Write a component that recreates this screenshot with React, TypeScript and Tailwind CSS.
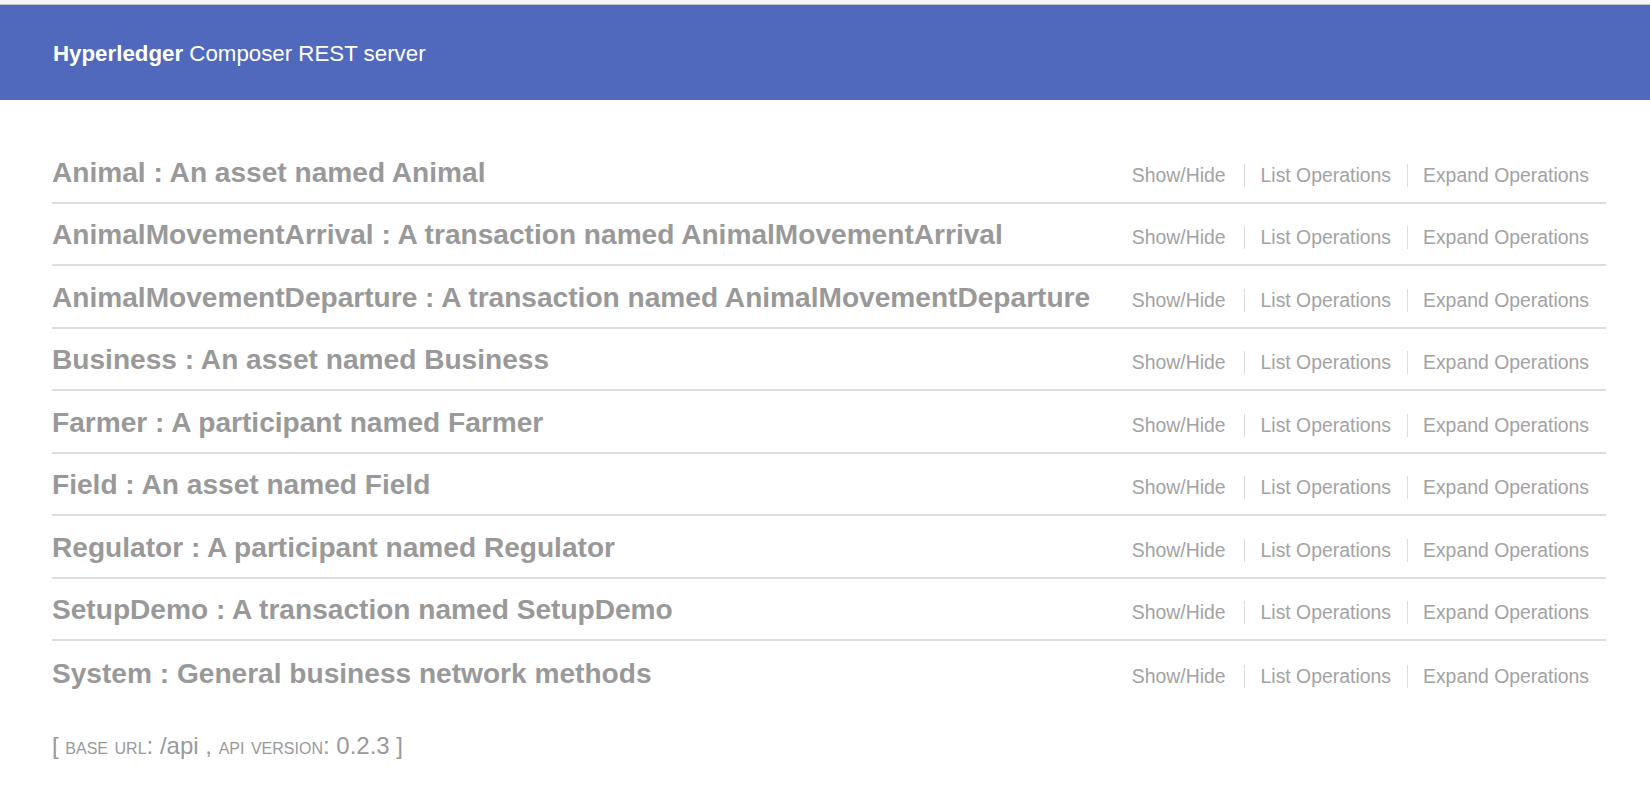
import React from "react";

const rows: [string, string][] = [
  ["Animal", "An asset named Animal"],
  ["AnimalMovementArrival", "A transaction named AnimalMovementArrival"],
  ["AnimalMovementDeparture", "A transaction named AnimalMovementDeparture"],
  ["Business", "An asset named Business"],
  ["Farmer", "A participant named Farmer"],
  ["Field", "An asset named Field"],
  ["Regulator", "A participant named Regulator"],
  ["SetupDemo", "A transaction named SetupDemo"],
  ["System", "General business network methods"],
];

export default function App() {
  return (
    <div className="min-h-[800px] bg-white font-['Liberation_Sans',Arial,sans-serif]">
      <div className="h-[5px] bg-[#f4f4f4] border-b border-[#c6c6c6]" />
      <div className="h-[95px] bg-[#5169bd] flex items-center pl-[53px] pt-[3px]">
        <div className="text-white text-[22.3px] leading-[26px]">
          <span className="font-bold">Hyperledger</span> Composer REST server
        </div>
      </div>
      <div className="ml-[52px] w-[1554px] mt-[41px]">
        {rows.map(([name, desc], i) => (
          <div
            key={name}
            className={
              "h-[62.5px] flex items-center justify-between pt-[3px] " +
              (i < rows.length - 1 ? "border-b-2 border-[#dddddd]" : "")
            }
          >
            <div className="text-[28.1px] leading-[30px] font-bold text-[#999999] whitespace-nowrap">
              {name} : {desc}
            </div>
            <div className="flex items-center text-[19.4px] leading-[23px] text-[#a3a3a3] pr-[17px] pt-[5px]">
              <span className="pr-[18px] border-r border-[#dddddd]">Show/Hide</span>
              <span className="pl-[16px] pr-[16px] border-r border-[#dddddd]">List Operations</span>
              <span className="pl-[15px]">Expand Operations</span>
            </div>
          </div>
        ))}
        <div className="mt-[28px] text-[24px] leading-[28px] text-[#999999]">
          [ <span className="[font-variant:small-caps] text-[23.5px]">base url</span>: /api ,{" "}
          <span className="[font-variant:small-caps] text-[23.5px]">api version</span>: 0.2.3 ]
        </div>
      </div>
    </div>
  );
}
